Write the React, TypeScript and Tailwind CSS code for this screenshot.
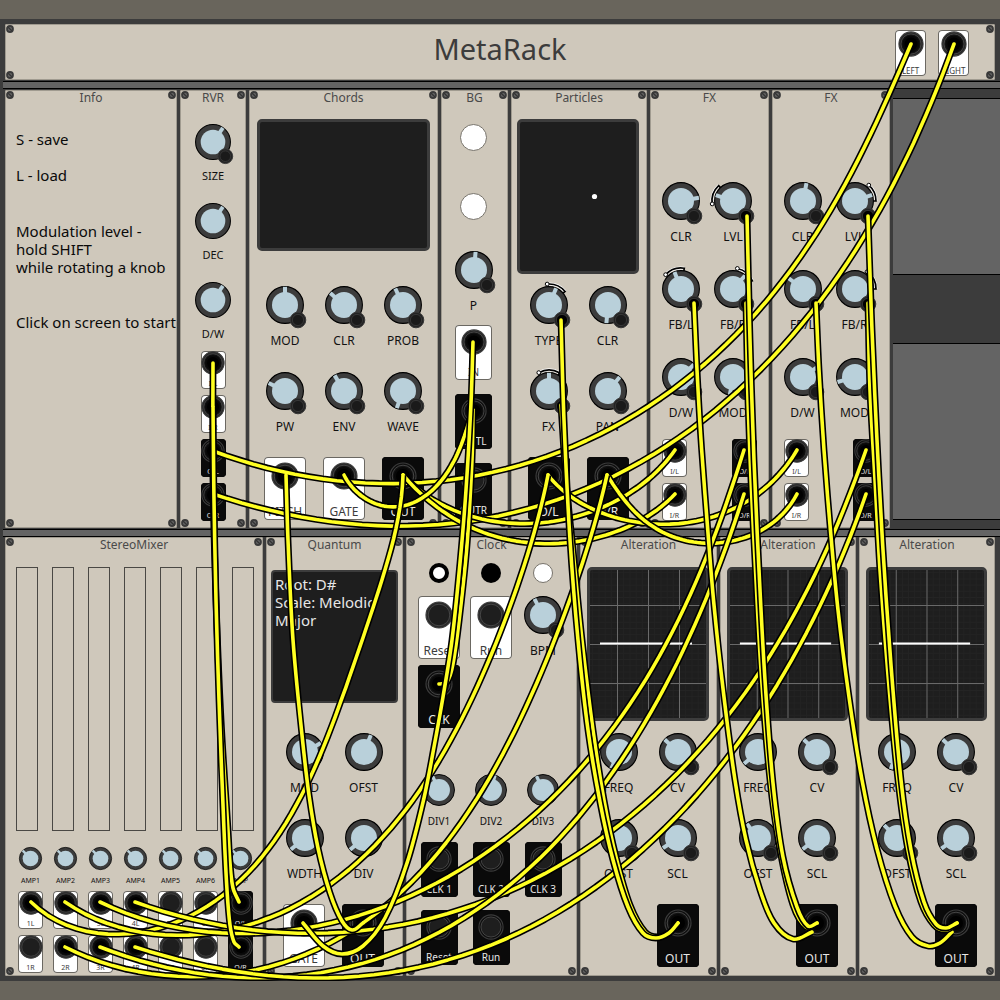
import { useState, type ReactNode } from "react";
import { clsx } from "clsx";

type Point = [number, number];

// every cable is a list of points it hangs through, in rack coordinates

// loose cables swing across the rack in one wide bow
const LOOSE: Point[][] = [
  // RVR out -> main out
  [[213, 451], [253, 465], [303, 475], [353, 482], [417, 483], [470, 477], [500, 471], [570, 447], [640, 411], [697, 372], [757, 313], [790, 270], [822, 223], [853, 170], [884, 107], [911, 44]],
  [[213, 494], [293, 515], [337, 522], [387, 526], [453, 524], [503, 515], [567, 496], [610, 478], [640, 462], [700, 423], [753, 377], [785, 344], [822, 298], [870, 226], [900, 171], [930, 107], [954, 44]],
  // chords, particles -> fx in
  [[403, 475], [423, 493], [453, 510], [503, 522], [533, 524], [580, 515], [630, 493], [660, 468], [675, 450]],
  [[403, 475], [437, 507], [470, 527], [507, 539], [547, 544], [590, 539], [627, 527], [650, 515], [675, 494]],
  [[548, 475], [573, 498], [617, 518], [667, 524], [713, 517], [755, 496], [783, 470], [797, 450]],
  [[607, 475], [627, 503], [650, 525], [677, 538], [703, 543], [730, 541], [763, 530], [783, 513], [797, 494]],
  [[344, 475], [357, 492], [377, 504], [400, 507], [423, 497], [447, 473], [463, 440], [473, 410]],
  // everything -> mixer in
  [[403, 475], [392, 540], [373, 610], [350, 680], [323, 745], [305, 788], [287, 820], [264, 853], [229, 892], [193, 915], [160, 929], [123, 934], [83, 930], [57, 919], [31, 902]],
  [[548, 475], [532, 540], [515, 593], [490, 657], [459, 725], [427, 779], [400, 817], [362, 858], [327, 886], [293, 908], [255, 923], [213, 933], [183, 935], [143, 933], [107, 922], [65, 902]],
  [[607, 475], [592, 538], [576, 585], [553, 640], [524, 708], [493, 770], [460, 827], [427, 869], [390, 902], [350, 930], [310, 951], [262, 969], [227, 976], [187, 977], [150, 973], [110, 963], [65, 947]],
  [[744, 450], [716, 534], [697, 580], [665, 643], [630, 703], [602, 744], [575, 777], [543, 807], [500, 842], [460, 868], [420, 890], [373, 912], [327, 925], [283, 932], [233, 933], [200, 931], [167, 925], [133, 915], [100, 902]],
  [[866, 450], [834, 534], [800, 605], [765, 662], [727, 716], [690, 760], [653, 797], [610, 833], [575, 857], [535, 879], [490, 899], [443, 914], [393, 926], [343, 932], [293, 934], [240, 929], [200, 920], [167, 912], [135, 902]],
  [[744, 494], [731, 535], [710, 590], [680, 657], [649, 714], [620, 761], [585, 809], [543, 856], [505, 890], [460, 920], [415, 943], [377, 959], [343, 969], [300, 976], [250, 978], [207, 974], [167, 967], [133, 958], [100, 947]],
  [[866, 494], [852, 535], [823, 600], [787, 667], [745, 733], [708, 782], [680, 814], [645, 847], [610, 876], [575, 901], [540, 922], [493, 945], [443, 962], [393, 972], [343, 977], [293, 977], [240, 972], [200, 965], [167, 956], [135, 947]],
];

// hanging cables drop almost straight and turn up at the lower jack
const HANGING: Point[][] = [
  // RVR in -> mixer out
  [[213, 363], [213, 480], [216, 600], [221, 720], [228, 830], [230, 863], [233, 888], [239, 902]],
  [[213, 407], [214, 500], [216, 600], [219, 700], [224, 830], [227, 890], [230, 925], [234, 942], [239, 947]],
  // BG -> clock, quantum
  [[473, 410], [472, 460], [467, 545], [460, 613], [453, 664], [447, 682], [439, 684]],
  [[473, 342], [471, 403], [466, 490], [460, 563], [452, 640], [443, 697], [434, 747], [424, 798], [407, 863], [385, 918], [363, 946], [342, 954], [323, 946], [303, 923]],
  // PITCH -> quantum out
  [[286, 475], [288, 540], [293, 640], [302, 735], [309, 795], [318, 848], [330, 893], [342, 921], [352, 930], [363, 923]],
  // alteration -> modulation inputs
  [[561, 405], [566, 480], [573, 550], [582, 640], [593, 730], [604, 800], [616, 857], [630, 905], [645, 932], [657, 937], [669, 933], [678, 923]],
  [[561, 320], [564, 420], [570, 540], [578, 640], [588, 730], [600, 802], [613, 860], [628, 907], [643, 933], [656, 938], [669, 933], [678, 923]],
  [[694, 303], [697, 370], [701, 440], [707, 520], [714, 605], [724, 697], [735, 780], [746, 840], [760, 890], [774, 923], [793, 939], [812, 932]],
  [[746, 303], [748, 400], [751, 480], [755, 560], [761, 670], [770, 780], [780, 850], [793, 905], [806, 927], [817, 923]],
  [[747, 216], [750, 340], [754, 460], [759, 570], [765, 680], [773, 783], [783, 857], [797, 907], [808, 926], [817, 923]],
  [[816, 303], [819, 370], [824, 450], [830, 525], [838, 610], [849, 697], [862, 780], [877, 849], [895, 906], [912, 937], [928, 946], [940, 943], [952, 932]],
  [[868, 303], [870, 390], [875, 480], [880, 570], [888, 675], [898, 780], [908, 850], [921, 902], [934, 925], [946, 930], [957, 923]],
  [[868, 216], [872, 330], [877, 440], [883, 550], [891, 665], [901, 780], [911, 850], [924, 902], [936, 924], [946, 928], [957, 923]],
];

const DEGREE = 5;

// solves m * x = r by Gauss elimination, one column of r per coordinate
function solve(m: number[][], r: number[][]) {
  const n = m.length;
  for (let i = 0; i < n; i++) {
    let p = i;
    for (let k = i + 1; k < n; k++) if (Math.abs(m[k][i]) > Math.abs(m[p][i])) p = k;
    [m[i], m[p]] = [m[p], m[i]];
    [r[i], r[p]] = [r[p], r[i]];
    for (let k = 0; k < n; k++) {
      if (k === i) continue;
      const f = m[k][i] / m[i][i];
      for (let j = i; j < n; j++) m[k][j] -= f * m[i][j];
      r[k] = r[k].map((v, c) => v - f * r[i][c]);
    }
  }
  return r.map((row, i) => row.map((v) => v / m[i][i]));
}

// least squares curve through the points, so the cable bows without kinks
function loosePath(pts: Point[]) {
  const dist = [0];
  for (let i = 1; i < pts.length; i++) {
    dist.push(dist[i - 1] + Math.hypot(pts[i][0] - pts[i - 1][0], pts[i][1] - pts[i - 1][1]));
  }
  const total = dist[dist.length - 1];
  const basis = (u: number) => Array.from({ length: DEGREE + 1 }, (_, k) => Math.pow(2 * u - 1, k));

  const m = Array.from({ length: DEGREE + 1 }, () => new Array<number>(DEGREE + 1).fill(0));
  const r = Array.from({ length: DEGREE + 1 }, () => [0, 0]);
  pts.forEach((p, i) => {
    const b = basis(dist[i] / total);
    const w = i === 0 || i === pts.length - 1 ? 50 : 1;
    for (let a = 0; a <= DEGREE; a++) {
      for (let c = 0; c <= DEGREE; c++) m[a][c] += w * b[a] * b[c];
      r[a][0] += w * b[a] * p[0];
      r[a][1] += w * b[a] * p[1];
    }
  });

  const coef = solve(m, r);
  const steps = 64;
  const out: string[] = [];
  for (let s = 0; s <= steps; s++) {
    const b = basis(s / steps);
    const x = b.reduce((sum, v, k) => sum + v * coef[k][0], 0);
    const y = b.reduce((sum, v, k) => sum + v * coef[k][1], 0);
    out.push(`${x.toFixed(1)} ${y.toFixed(1)}`);
  }
  return `M${out.join("L")}`;
}

// Catmull-Rom spline, tangents scaled to each segment's length
function hangingPath(pts: Point[]) {
  const len = (p: Point, q: Point) => Math.hypot(q[0] - p[0], q[1] - p[1]) || 1;
  let d = `M${pts[0][0]} ${pts[0][1]}`;
  for (let i = 0; i < pts.length - 1; i++) {
    const a = pts[Math.max(i - 1, 0)];
    const b = pts[i];
    const c = pts[i + 1];
    const e = pts[Math.min(i + 2, pts.length - 1)];
    const l = len(b, c);
    const k1 = l / (3 * len(a, c));
    const k2 = l / (3 * len(b, e));
    d += `C${b[0] + (c[0] - a[0]) * k1} ${b[1] + (c[1] - a[1]) * k1} ${c[0] - (e[0] - b[0]) * k2} ${c[1] - (e[1] - b[1]) * k2} ${c[0]} ${c[1]}`;
  }
  return d;
}

const CABLE_PATHS = [...LOOSE.map(loosePath), ...HANGING.map(hangingPath)];

function polar(cx: number, cy: number, r: number, deg: number) {
  const a = (deg * Math.PI) / 180;
  return [cx + r * Math.sin(a), cy - r * Math.cos(a)];
}

function Cables() {
  return (
    <svg
      className="absolute inset-0 w-full h-full pointer-events-none"
      viewBox="0 19 1000 962"
      preserveAspectRatio="none"
      fill="none"
      strokeLinejoin="round"
      aria-hidden="true"
    >
      {CABLE_PATHS.map((d, i) => (
        <g key={i}>
          <path d={d} stroke="#000" strokeWidth="6.8" />
          <path d={d} stroke="#ffff22" strokeWidth="3.6" strokeLinecap="round" />
        </g>
      ))}
    </svg>
  );
}

function Screw({ className }: { className: string }) {
  return (
    <svg className={clsx("absolute w-2 h-2", className)} viewBox="0 0 8 8" aria-hidden="true">
      <circle cx="4" cy="4" r="3.9" fill="#3a3a3a" />
      <circle cx="4" cy="4" r="2.1" fill="#666" />
      <path d="M2.2 2.2L5.8 5.8" stroke="#333" strokeWidth="1.3" />
    </svg>
  );
}

function Screws() {
  return (
    <>
      <Screw className="left-[1px] top-[1px]" />
      <Screw className="right-[1px] top-[1px]" />
      <Screw className="left-[1px] bottom-[1px]" />
      <Screw className="right-[1px] bottom-[1px]" />
    </>
  );
}

interface ModuleProps {
  title: string;
  className: string;
  children?: ReactNode;
}

function Module({ title, className, children }: ModuleProps) {
  return (
    <section
      className={clsx(
        "relative min-w-0 flex flex-col pb-[3px] rounded-xs bg-[#cfc8bb] shadow-[inset_0_0_0_1px_#a09b90]",
        className
      )}
    >
      <Screws />
      <h2 className="text-center text-[12px] leading-4 text-[#4a4a4a]">{title}</h2>
      {children}
    </section>
  );
}

const KNOB_SIZES = {
  lg: { box: "w-[38px] h-[38px]", text: "mt-[9px] text-[12px] leading-4" },
  md: { box: "w-[36px] h-[36px]", text: "mt-2 text-[11px] leading-4" },
  sm: { box: "w-[32px] h-[32px]", text: "mt-[7px] text-[10px] leading-4" },
  xs: { box: "w-[23px] h-[23px]", text: "mt-[6px] text-[7px] leading-[10px]" },
};

interface KnobProps {
  label: string;
  angle: number;
  size?: keyof typeof KNOB_SIZES;
  mod?: boolean | "plugged";
  arc?: [number, number];
}

function Knob({ label, angle, size = "lg", mod, arc }: KnobProps) {
  const [value, setValue] = useState(angle);
  const s = KNOB_SIZES[size];
  const [ax, ay] = arc ? polar(19, 19, 21, arc[0]) : [0, 0];
  const [bx, by] = arc ? polar(19, 19, 21, arc[1]) : [0, 0];
  const [ex, ey] = arc ? polar(19, 19, 18, arc[1]) : [0, 0];

  return (
    <label className="flex flex-col items-center text-[#111]">
      <span className={clsx("relative block", s.box)}>
        <svg className="w-full h-full overflow-visible" viewBox="0 0 38 38" aria-hidden="true">
          {arc && (
            <>
              <path d={`M${ax} ${ay}A21 21 0 0 1 ${bx} ${by}`} fill="none" stroke="#fff" strokeWidth="3" />
              <path d={`M${ax} ${ay}A21 21 0 0 1 ${bx} ${by}L${ex} ${ey}`} fill="none" stroke="#000" strokeWidth="1.7" />
            </>
          )}
          <circle cx="19" cy="19" r="18.4" fill="#3c3c3c" stroke="#000" strokeWidth="1.1" />
          <circle cx="19" cy="19" r="13" fill="#b9d0da" />
          <rect x="17" y="0.8" width="4" height="7" fill="#b9d0da" transform={`rotate(${value} 19 19)`} />
          {arc && <circle cx={ax} cy={ay} r="1.9" fill="#fff" stroke="#000" strokeWidth="1" />}
          {mod && (
            <>
              <circle cx="32" cy="34" r="7.8" fill="#232323" stroke="#383838" strokeWidth="1" />
              <circle cx="32" cy="34" r="5.6" fill={mod === "plugged" ? "#000" : "#1a1a1a"} stroke="#3c3c3c" strokeWidth="0.8" />
            </>
          )}
        </svg>
        <input
          type="range"
          min={-180}
          max={270}
          value={value}
          onChange={(e) => setValue(Number(e.target.value))}
          className="absolute inset-0 w-full h-full opacity-0 cursor-pointer"
        />
      </span>
      <span className={clsx("whitespace-nowrap", s.text)}>{label}</span>
    </label>
  );
}

const JACK_SIZES = {
  lg: { box: "w-[42px] h-[63px] pt-[5px]", ring: "w-7 h-7", text: "text-[12px] leading-4" },
  md: { box: "w-[37px] h-[55px] pt-[4px]", ring: "w-[26px] h-[26px]", text: "text-[10px] leading-4" },
  out: { box: "w-[31px] h-[46px] pt-[1px]", ring: "w-[26px] h-[26px]", text: "text-[8px] leading-[10px]" },
  sm: { box: "w-[25px] h-[38px]", ring: "w-6 h-6", text: "text-[7px] leading-[10px]" },
};

interface JackProps {
  label: string;
  size?: keyof typeof JACK_SIZES;
  dark?: boolean;
  plugged?: boolean;
}

function Jack({ label, size = "lg", dark, plugged }: JackProps) {
  const s = JACK_SIZES[size];
  return (
    <button
      type="button"
      className={clsx(
        "shrink-0 flex flex-col items-center justify-between rounded-[4px] border-0 ring-1 ring-inset",
        dark ? "bg-[#0a0a0a] text-[#e6e6e6] ring-[#0a0a0a]" : "bg-white text-[#3c3c3c] ring-[#6b6862]",
        s.box
      )}
    >
      <svg className={s.ring} viewBox="0 0 28 28" aria-hidden="true">
        <circle cx="14" cy="14" r="13" fill={dark ? "#0e0e0e" : "#282828"} stroke="#3c3c3c" strokeWidth="1.2" />
        <circle cx="14" cy="14" r="10.8" fill={plugged ? "#121212" : "#1e1e1e"} stroke="#464646" strokeWidth="1" />
        {plugged && (
          <>
            <circle cx="14" cy="14" r="9" fill="#080808" />
            <circle cx="14" cy="14" r="7" fill="#000" />
          </>
        )}
      </svg>
      <span className={clsx("whitespace-nowrap", s.text)}>{label}</span>
    </button>
  );
}

function Row({ className, cell, children }: { className?: string; cell: "wide" | "narrow"; children: ReactNode[] }) {
  return (
    <div className={clsx("flex justify-center", className)}>
      {children.map((c, i) => (
        <div key={i} className={clsx("flex justify-center items-start", cell === "wide" ? "w-[59px]" : "w-[52px]")}>
          {c}
        </div>
      ))}
    </div>
  );
}

function Lamp({ className }: { className: string }) {
  return <button type="button" aria-label="trigger" className={clsx("rounded-full", className)} />;
}

function Rail() {
  return <div className="mt-[1px] ml-[3px] h-2 border-y border-black bg-[#646464]" />;
}

function Reverb() {
  return (
    <Module title="RVR" className="flex-[66_1_0%] items-center">
      <div className="mt-[18px] flex flex-col gap-[19px]">
        <Knob label="SIZE" angle={35} size="md" mod />
        <Knob label="DEC" angle={35} size="md" />
        <Knob label="D/W" angle={35} size="md" />
      </div>
      <div className="mt-[9px] flex flex-col gap-[6px]">
        <Jack label="I/L" size="sm" plugged />
        <Jack label="I/R" size="sm" plugged />
        <Jack label="O/L" size="sm" dark plugged />
        <Jack label="O/R" size="sm" dark plugged />
      </div>
    </Module>
  );
}

function Chords() {
  return (
    <Module title="Chords" className="flex-[189_1_0%]">
      <div className="mt-[13px] mx-2 h-[132px] rounded-[5px] border-[3px] border-[#3c3c3c] bg-[#1e1e1e]" />
      <Row cell="wide" className="mt-[35px] pl-[1px]">
        <Knob label="MOD" angle={0} mod />
        <Knob label="CLR" angle={-49} mod />
        <Knob label="PROB" angle={-25} mod />
      </Row>
      <Row cell="wide" className="mt-[23px] pl-[1px]">
        <Knob label="PW" angle={-64} mod />
        <Knob label="ENV" angle={-31} mod />
        <Knob label="WAVE" angle={200} mod />
      </Row>
      <Row cell="wide" className="mt-[22px] pl-[1px]">
        <Jack label="PITCH" plugged />
        <Jack label="GATE" plugged />
        <Jack label="OUT" dark plugged />
      </Row>
    </Module>
  );
}

function Background() {
  return (
    <Module title="BG" className="flex-[67_1_0%]">
      <div className="flex flex-col items-center pr-[2px]">
        <Lamp className="mt-[18px] w-[27px] h-[27px] bg-white border border-[#77736b]" />
        <Lamp className="mt-[42px] mb-[31px] w-[27px] h-[27px] bg-white border border-[#77736b]" />
        <Knob label="P" angle={5} mod />
        <div className="mt-[11px] flex flex-col gap-[14px]">
          <Jack label="IN" size="md" plugged />
          <Jack label="OUTL" size="md" dark plugged />
          <Jack label="OUTR" size="md" dark />
        </div>
      </div>
    </Module>
  );
}

function Particles() {
  return (
    <Module title="Particles" className="flex-[136_1_0%]">
      <div className="mt-[13px] ml-[6px] mr-2 h-[155px] rounded-[5px] border-[3px] border-[#3c3c3c] bg-[#1e1e1e]">
        <svg className="w-full h-full" viewBox="0 0 116 149" aria-hidden="true">
          <circle cx="74.5" cy="74.5" r="2.6" fill="#fff" />
        </svg>
      </div>
      <Row cell="wide" className="mt-3 pr-[2px]">
        <Knob label="TYPE" angle={23} mod="plugged" arc={[-5, 50]} />
        <Knob label="CLR" angle={185} mod />
      </Row>
      <Row cell="wide" className="mt-[23px] pr-[2px]">
        <Knob label="FX" angle={0} mod="plugged" arc={[-29, 30]} />
        <Knob label="PAN" angle={40} mod />
      </Row>
      <Row cell="wide" className="mt-[22px] pr-[2px]">
        <Jack label="O/L" dark plugged />
        <Jack label="O/R" dark plugged />
      </Row>
    </Module>
  );
}

interface FxProps {
  className: string;
  angles: number[];
  arcs: ([number, number] | undefined)[];
}

function Fx({ className, angles, arcs }: FxProps) {
  return (
    <Module title="FX" className={className}>
      <Row cell="narrow" className="mt-[76px] pr-[5px]">
        <Knob label="CLR" angle={angles[0]} mod />
        <Knob label="LVL" angle={angles[1]} mod="plugged" arc={arcs[0]} />
      </Row>
      <Row cell="narrow" className="mt-[25px] pr-[5px]">
        <Knob label="FB/L" angle={angles[2]} mod="plugged" arc={arcs[1]} />
        <Knob label="FB/R" angle={angles[3]} mod="plugged" arc={arcs[2]} />
      </Row>
      <Row cell="narrow" className="mt-[25px] pr-[5px]">
        <Knob label="D/W" angle={angles[4]} mod />
        <Knob label="MOD" angle={angles[5]} mod />
      </Row>
      <div className="mt-[18px] px-3 flex justify-between">
        <Jack label="I/L" size="sm" plugged />
        <Jack label="O/L" size="sm" dark plugged />
      </div>
      <div className="mt-[6px] px-3 flex justify-between">
        <Jack label="I/R" size="sm" plugged />
        <Jack label="O/R" size="sm" dark plugged />
      </div>
    </Module>
  );
}

const CHANNELS = [
  { label: "AMP1", left: "1L", right: "1R", l: true, r: false },
  { label: "AMP2", left: "2L", right: "2R", l: true, r: true },
  { label: "AMP3", left: "3L", right: "3R", l: true, r: true },
  { label: "AMP4", left: "4L", right: "4R", l: true, r: true },
  { label: "AMP5", left: "5L", right: "5R", l: false, r: false },
  { label: "AMP6", left: "6L", right: "6R", l: false, r: false },
  { label: "AMP", left: "O/L", right: "O/R", l: true, r: true, out: true },
];

function StereoMixer() {
  return (
    <Module title="StereoMixer" className="flex-[258_1_0%]">
      <div className="mt-[14px] pl-1 pr-[2px] grid grid-cols-7 justify-items-center">
        {CHANNELS.map((c) => (
          <div key={c.label} className="w-[22px] h-[264px] border border-[#4a4844]" />
        ))}
      </div>
      <div className="mt-4 pl-2 pr-[5px] grid grid-cols-7">
        {CHANNELS.map((c) => (
          <div key={c.label} className="flex flex-col items-center">
            <Knob label={c.label} angle={-45} size="xs" />
            <div className="mt-[5px] flex flex-col gap-[6px]">
              <Jack label={c.left} size="sm" dark={c.out} plugged={c.l} />
              <Jack label={c.right} size="sm" dark={c.out} plugged={c.r} />
            </div>
          </div>
        ))}
      </div>
    </Module>
  );
}

function Quantum() {
  return (
    <Module title="Quantum" className="flex-[137_1_0%]">
      <div className="mt-[17px] mx-[5px] h-[133px] px-[2px] pt-[3px] rounded-[4px] border-2 border-[#3c3c3c] bg-[#1e1e1e] text-[15px] leading-[18px] text-[#e6e6e6]">
        Root: D#
        <br />
        Scale: Melodic
        <br />
        Major
      </div>
      <Row cell="wide" className="mt-[30px] pr-[1px]">
        <Knob label="MOD" angle={60} />
        <Knob label="OFST" angle={22} />
      </Row>
      <Row cell="wide" className="mt-[23px] pr-[1px]">
        <Knob label="WDTH" angle={231} />
        <Knob label="DIV" angle={230} />
      </Row>
      <Row cell="wide" className="mt-[22px] pr-[3px]">
        <Jack label="GATE" plugged />
        <Jack label="OUT" dark plugged />
      </Row>
    </Module>
  );
}

function Clock() {
  return (
    <Module title="Clock" className="flex-[171_1_0%]">
      <Row cell="narrow" className="mt-[10px] pr-[1px]">
        <Lamp className="w-5 h-5 bg-white border-4 border-black" />
        <Lamp className="w-5 h-5 bg-black" />
        <Lamp className="w-5 h-5 bg-white border border-[#77736b]" />
      </Row>
      <Row cell="narrow" className="mt-[13px] pr-[1px]">
        <Jack label="Reset" />
        <Jack label="Run" />
        <Knob label="BPM" angle={-28} mod />
      </Row>
      <Row cell="narrow" className="mt-[6px] pr-[1px]">
        <Jack label="CLK" dark plugged />
        {null}
        {null}
      </Row>
      <Row cell="narrow" className="mt-[46px] pr-[1px]">
        <Knob label="DIV1" angle={-25} size="sm" />
        <Knob label="DIV2" angle={15} size="sm" />
        <Knob label="DIV3" angle={-25} size="sm" />
      </Row>
      <Row cell="narrow" className="mt-[13px] pr-[1px]">
        <Jack label="CLK 1" size="md" dark />
        <Jack label="CLK 2" size="md" dark />
        <Jack label="CLK 3" size="md" dark />
      </Row>
      <Row cell="narrow" className="mt-[13px] pr-[1px]">
        <Jack label="Reset" size="md" dark />
        <Jack label="Run" size="md" dark />
        {null}
      </Row>
    </Module>
  );
}

function Scope() {
  const minor = Array.from({ length: 25 }, (_, i) => i * 6.2 + 2.7);
  return (
    <svg className="w-full h-full" viewBox="0 0 116 148" preserveAspectRatio="none" aria-hidden="true">
      {minor.map((p) => (
        <path key={p} d={`M${p} 0V148M0 ${p}H116`} stroke="#242424" strokeWidth="1" />
      ))}
      <path d="M27.5 0V148M58.5 0V148M89.5 0V148M0 35.5H116M0 74.5H116M0 113.5H116" stroke="#6a6a6a" strokeWidth="1" />
      <path d="M10 73.5H102" stroke="#fff" strokeWidth="2" />
    </svg>
  );
}

function Alteration({ className, angles }: { className: string; angles: number[] }) {
  return (
    <Module title="Alteration" className={className}>
      <div className="mt-[14px] ml-[7px] mr-2 h-[154px] rounded-[5px] border-[3px] border-[#3c3c3c] bg-[#1e1e1e]">
        <Scope />
      </div>
      <Row cell="wide" className="mt-3 pr-[1px]">
        <Knob label="FREQ" angle={angles[0]} />
        <Knob label="CV" angle={angles[1]} mod />
      </Row>
      <Row cell="wide" className="mt-[23px] pr-[1px]">
        <Knob label="OFST" angle={angles[2]} mod />
        <Knob label="SCL" angle={angles[3]} mod />
      </Row>
      <Row cell="wide" className="mt-[22px] pr-[1px]">
        {null}
        <Jack label="OUT" dark plugged />
      </Row>
    </Module>
  );
}

export default function App() {
  return (
    <div className="min-h-screen bg-[#69655c] pt-[19px] font-['Noto_Sans',sans-serif]">
      <main className="relative bg-[#3c3c3c] py-[5px]">
        <header className="relative mx-[5px] h-14 grid grid-cols-[1fr_auto_1fr] items-center rounded-xs bg-[#cfc8bb] shadow-[inset_0_0_0_1px_#a09b90]">
          <Screws />
          <h1 className="col-start-2 pb-[6px] text-[29px] leading-8 text-[#3c3c3c]">MetaRack</h1>
          <div className="flex justify-end gap-3 pr-[26px] pt-[2px]">
            <Jack label="LEFT" size="out" plugged />
            <Jack label="RIGHT" size="out" plugged />
          </div>
        </header>

        <Rail />

        <div className="mt-[1px] pl-[5px] min-h-[438px] flex gap-[3px]">
          <Module title="Info" className="flex-[172_1_0%]">
            <div className="pl-[11px] text-[15px] leading-[18px] text-[#0a0a0a] whitespace-nowrap">
              <p className="mt-6">S - save</p>
              <p className="mt-[18px]">L - load</p>
              <p className="mt-[38px]">
                Modulation level -
                <br />
                hold SHIFT
                <br />
                while rotating a knob
              </p>
              <p className="mt-[37px]">Click on screen to start</p>
            </div>
          </Module>
          <Reverb />
          <Chords />
          <Background />
          <Particles />
          <Fx
            className="flex-[119_1_0%]"
            angles={[80, -71, -21, 42, 46, 190]}
            arcs={[[-98, -43], [-47, 9], [12, 67]]}
          />
          <Fx
            className="flex-[118_1_0%]"
            angles={[11, 70, -53, 75, 55, 254]}
            arcs={[[41, 90], undefined, [35, 90]]}
          />
          <div className="flex-[107_1_0%] flex flex-col py-2">
            <div className="flex-1 border-y border-black bg-[#646464]" />
            <div className="h-[68px]" />
            <div className="flex-1 border-y border-black bg-[#646464]" />
          </div>
        </div>

        <Rail />

        <div className="px-[5px] min-h-[439px] flex gap-[3px]">
          <StereoMixer />
          <Quantum />
          <Clock />
          <Alteration className="flex-[137_1_0%]" angles={[205, -47, -40, 236]} />
          <Alteration className="flex-[136_1_0%]" angles={[230, -47, -38, 232]} />
          <Alteration className="flex-[136_1_0%]" angles={[200, -47, -45, 234]} />
        </div>

        <Cables />
      </main>
    </div>
  );
}
